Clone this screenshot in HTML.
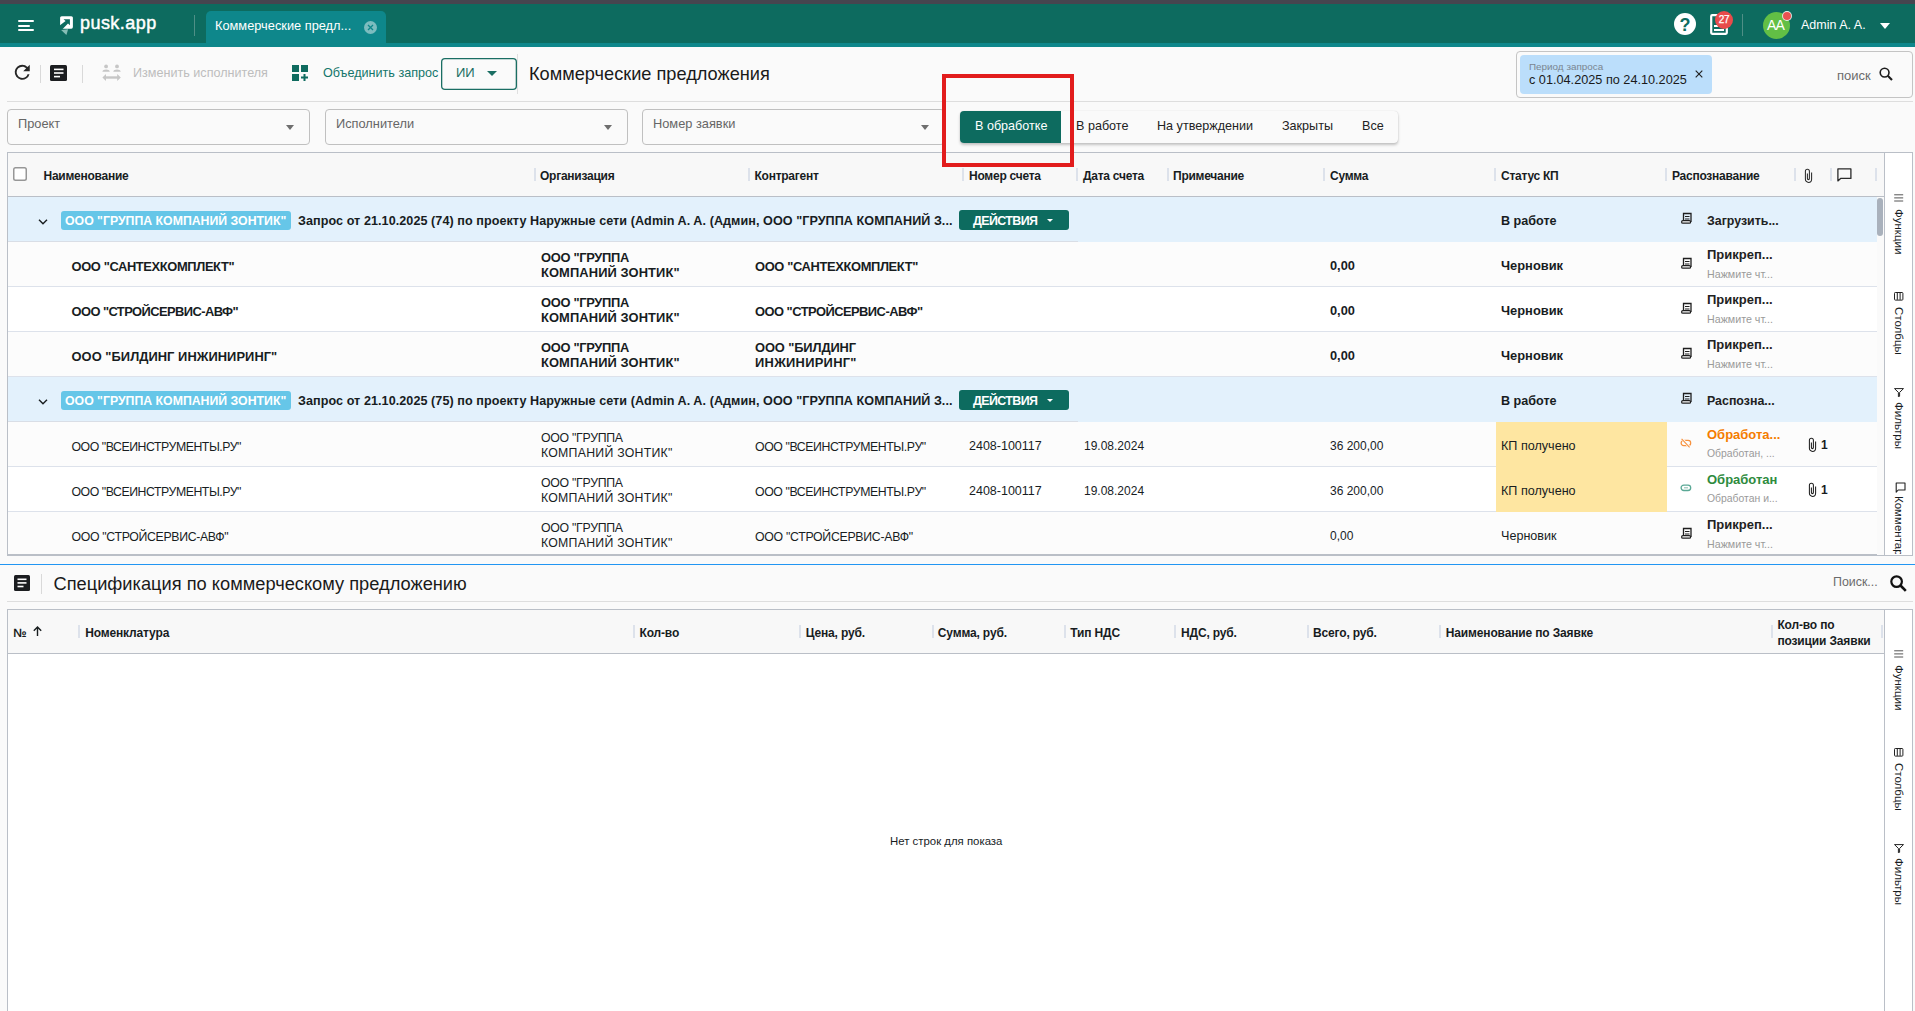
<!DOCTYPE html>
<html lang="ru">
<head>
<meta charset="utf-8">
<title>Коммерческие предложения</title>
<style>
*{box-sizing:border-box;margin:0;padding:0}
html,body{width:1915px;height:1011px;overflow:hidden;background:#fafafa}
body{font-family:"Liberation Sans",sans-serif;position:relative;color:#212121}
.a{position:absolute}
.t{position:absolute;white-space:nowrap;line-height:1}
svg{display:block}
/* top bar */
#strip{left:0;top:0;width:1915px;height:4px;background:#46454f}
#topbar{left:0;top:4px;width:1915px;height:39px;background:#0d6b5f}
#topline{left:0;top:43px;width:1915px;height:4px;background:#0e878b}
#tab{left:206px;top:11px;width:180px;height:32px;background:#0e878b;border-radius:5px 5px 0 0}
/* toolbar */
.vsep{position:absolute;width:1px;background:#d9d9d9}
.hline{position:absolute;height:1px;background:#dcdcdc}
.sel{position:absolute;top:109px;height:36px;border:1px solid #c0c0c0;border-radius:4px;background:#fafafa}
.tri{position:absolute;width:0;height:0;border-left:4px solid transparent;border-right:4px solid transparent;border-top:5px solid #6e6e6e}
/* tables */
.grid{position:absolute;border:1px solid #babfc7;background:#fff}
.hdr{position:absolute;left:0;top:0;background:#f8f8f8;border-bottom:1px solid #babfc7}
.hs{position:absolute;width:2px;height:13px;background:#dde2eb}
.ht{position:absolute;white-space:nowrap;font-weight:700;font-size:12px;color:#181d1f;line-height:1}
.row{position:absolute;left:0;height:45px;border-bottom:1px solid #dde2eb}
.side{position:absolute;background:#fff;border-left:1px solid #babfc7}
.vt{position:absolute;writing-mode:vertical-rl;white-space:nowrap;font-size:12px;color:#181d1f;line-height:1}
</style>
</head>
<body>
<!-- ===== TOP BAR ===== -->
<div class="a" id="strip"></div>
<div class="a" id="topbar"></div>
<div class="a" id="topline"></div>
<!-- hamburger -->
<div class="a" style="left:18px;top:19.6px;width:16px;height:2px;background:#fff;border-radius:1px"></div>
<div class="a" style="left:18px;top:24.5px;width:12px;height:2px;background:#fff;border-radius:1px"></div>
<div class="a" style="left:18px;top:29.3px;width:16px;height:2px;background:#fff;border-radius:1px"></div>
<!-- logo -->
<svg class="a" style="left:59px;top:15px" width="16" height="22" viewBox="0 0 16 22">
  <rect x="1.1" y="1.2" width="12.8" height="12.5" rx="1.6" fill="#fff"/>
  <path d="M4.5 4.2H10.9V10.2L9 8.4 3.6 13.9H1V10.2L6.6 6.1z" fill="#0d6b5f"/>
  <path d="M2.1 15.1L9.1 14.2 7.4 19.9z" fill="#86bdb5"/>
</svg>
<div class="t" style="left:80px;top:14px;font-size:18px;font-weight:400;color:#fff;-webkit-text-stroke:0.45px #fff;letter-spacing:0.45px">pusk.app</div>
<div class="vsep" style="left:194px;top:15px;height:21px;background:#4f8f86"></div>
<div class="a" id="tab"></div>
<div class="t" style="left:215px;top:20px;font-size:12.8px;color:#fff">Коммерческие предл...</div>
<div class="a" style="left:364px;top:21px;width:13px;height:13px;border-radius:50%;background:#7cbcbf"></div>
<svg class="a" style="left:367px;top:24px" width="7" height="7" viewBox="0 0 7 7"><path d="M1 1l5 5M6 1l-5 5" stroke="#0e878b" stroke-width="1.3"/></svg>
<!-- right side -->
<div class="a" style="left:1674px;top:13px;width:22px;height:22px;border-radius:50%;background:#fff"></div>
<div class="t" style="left:1674px;top:15.5px;width:22px;text-align:center;font-size:18px;font-weight:700;color:#0d6b5f">?</div>
<svg class="a" style="left:1710px;top:14px" width="18" height="21" viewBox="0 0 18 21"><rect x="1.2" y="1.2" width="15.6" height="18.6" rx="1" fill="none" stroke="#fff" stroke-width="2.2"/><rect x="4" y="11" width="10" height="2" fill="#fff"/><rect x="4" y="15" width="10" height="2" fill="#fff"/></svg>
<div class="a" style="left:1715px;top:11px;width:18px;height:18px;border-radius:50%;background:#e84b4b"></div>
<div class="t" style="left:1715px;top:15px;width:18px;text-align:center;font-size:10px;font-weight:400;color:#fff;-webkit-text-stroke:0.25px #fff;letter-spacing:-0.2px">27</div>
<div class="vsep" style="left:1742px;top:14px;height:22px;background:#4f8f86"></div>
<div class="a" style="left:1763px;top:12px;width:27px;height:27px;border-radius:50%;background:#62bf45"></div>
<div class="t" style="left:1767px;top:18px;font-size:14px;color:#fff;letter-spacing:-0.8px">AA</div>
<div class="a" style="left:1782.6px;top:11.6px;width:8px;height:8px;border-radius:50%;background:#e85252;box-shadow:0 0 0 0.9px #e8f0ee"></div>
<div class="t" style="left:1801px;top:19px;font-size:12.5px;color:#fff">Admin A. A.</div>
<div class="tri" style="left:1880px;top:23px;border-left-width:5px;border-right-width:5px;border-top:6px solid #fff"></div>

<!-- ===== TOOLBAR ===== -->
<svg class="a" style="left:10.5px;top:61px" width="22.5" height="22.5" viewBox="0 0 24 24"><path d="M17.65 6.35A7.958 7.958 0 0 0 12 4a8 8 0 1 0 7.73 10h-2.08A5.99 5.99 0 0 1 12 18a6 6 0 1 1 0-12c1.66 0 3.14.69 4.22 1.78L13 11h7V4z" fill="#262626"/></svg>
<div class="vsep" style="left:40px;top:65px;height:18px"></div>
<svg class="a" style="left:50px;top:65px" width="17" height="16" viewBox="0 0 17 16"><rect x="0" y="0" width="17" height="16" rx="1.5" fill="#1b1d20"/><rect x="4" y="3.6" width="9.5" height="1.6" fill="#fff"/><rect x="4" y="7.2" width="9.5" height="1.6" fill="#fff"/><rect x="4" y="10.8" width="6" height="1.6" fill="#fff"/></svg>
<div class="vsep" style="left:82px;top:65px;height:18px"></div>
<svg class="a" style="left:102px;top:64px" width="19" height="17" viewBox="0 0 19 17"><circle cx="4.1" cy="2.4" r="1.9" fill="#c6c6c6"/><circle cx="15" cy="2.4" r="1.9" fill="#c6c6c6"/><path d="M0.4 7.8c0-3.2 7.4-3.2 7.4 0z M11.3 7.8c0-3.2 7.4-3.2 7.4 0z" fill="#c6c6c6"/><path d="M3 13.5h13" stroke="#c6c6c6" stroke-width="2.4"/><path d="M0.4 13.5l3.6-3.4v6.8z M18.8 13.5l-3.6-3.4v6.8z" fill="#c6c6c6"/></svg>
<div class="t" style="left:133px;top:66.5px;font-size:12.6px;color:#bdbdbd">Изменить исполнителя</div>
<svg class="a" style="left:292px;top:65px" width="17" height="16" viewBox="0 0 17 16"><rect x="0" y="0" width="7" height="7" fill="#0f6b5f"/><rect x="9" y="0" width="7" height="7" fill="#0f6b5f"/><rect x="0" y="9" width="7" height="7" fill="#0f6b5f"/><path d="M12.5 9v7M9 12.5h7" stroke="#0f6b5f" stroke-width="2"/></svg>
<div class="t" style="left:323px;top:66.5px;font-size:12.6px;color:#14756a">Объединить запрос</div>
<div class="a" style="left:441px;top:58px;width:76px;height:32px;box-shadow:inset 0 0 0 1.3px #1a6e63;border-radius:4px"></div>
<div class="t" style="left:456px;top:66px;font-size:13px;color:#1a6e63">ИИ</div>
<div class="tri" style="left:487px;top:71px;border-left-width:5px;border-right-width:5px;border-top:5px solid #1a6e63"></div>
<div class="vsep" style="left:517px;top:54px;height:40px;background:#e0e0e0"></div>
<div class="t" style="left:529px;top:65px;font-size:18.2px;color:#1a1a1a">Коммерческие предложения</div>
<!-- search -->
<div class="a" style="left:1516px;top:51px;width:397px;height:47px;border:1px solid #c4c4c4;border-radius:4px"></div>
<div class="a" style="left:1520px;top:55px;width:192px;height:39px;background:#bbdefb;border-radius:4px"></div>
<div class="t" style="left:1529px;top:62px;font-size:9.9px;color:#7a8590">Период запроса</div>
<div class="t" style="left:1529px;top:74px;font-size:12.7px;color:#1a1a1a">с 01.04.2025 по 24.10.2025</div>
<svg class="a" style="left:1695px;top:70px" width="8" height="8" viewBox="0 0 8 8"><path d="M0.7 0.7l6.6 6.6M7.3 0.7l-6.6 6.6" stroke="#222" stroke-width="1.15"/></svg>
<div class="t" style="left:1837px;top:69px;font-size:13px;color:#6b6b6b">поиск</div>
<svg class="a" style="left:1879px;top:66.5px" width="14" height="14" viewBox="0 0 14 14"><circle cx="5.6" cy="5.6" r="4.4" fill="none" stroke="#1c1c1c" stroke-width="1.6"/><path d="M8.8 8.8l4.2 4.2" stroke="#1c1c1c" stroke-width="2.1"/></svg>
<div class="hline" style="left:7px;top:101px;width:1906px;background:#dedede"></div>

<!-- ===== FILTER ROW ===== -->
<div class="sel" style="left:7px;width:303px"></div>
<div class="t" style="left:18px;top:118.4px;font-size:12.8px;color:#666">Проект</div>
<div class="tri" style="left:286px;top:125px"></div>
<div class="sel" style="left:325px;width:303px"></div>
<div class="t" style="left:336px;top:118.4px;font-size:12.8px;color:#666">Исполнители</div>
<div class="tri" style="left:604px;top:125px"></div>
<div class="sel" style="left:642px;width:303px"></div>
<div class="t" style="left:653px;top:118.4px;font-size:12.8px;color:#666">Номер заявки</div>
<div class="tri" style="left:921px;top:125px"></div>
<!-- segmented -->
<div class="a" style="left:960px;top:111px;width:438px;height:32px;background:#fafafa;border-radius:4px;box-shadow:0 2px 3px rgba(0,0,0,0.22),0 0 1px rgba(0,0,0,0.18)"></div>
<div class="a" style="left:960px;top:111px;width:101px;height:32px;background:#0d6b5f;border-radius:4px 0 0 4px"></div>
<div class="t" style="left:975px;top:120px;font-size:12.6px;color:#fff">В обработке</div>
<div class="t" style="left:1076px;top:120px;font-size:12.6px;color:#232323">В работе</div>
<div class="t" style="left:1157px;top:120px;font-size:12.6px;color:#232323">На утверждении</div>
<div class="t" style="left:1282px;top:120px;font-size:12.6px;color:#232323">Закрыты</div>
<div class="t" style="left:1362px;top:120px;font-size:12.6px;color:#232323">Все</div>

<!-- ===== TABLE 1 ===== -->
<div class="a" style="left:7px;top:152px;width:1906px;height:404px;border:1px solid #babfc7;border-bottom-width:2px;background:#fff"></div>
<div class="a" style="left:8px;top:153px;width:1876px;height:44px;background:#f8f8f8;border-bottom:1px solid #babfc7"></div>
<div class="a" style="left:13px;top:167px;width:14px;height:14px;box-shadow:inset 0 0 0 1.5px #979797;border-radius:2.5px;background:#fff"></div>
<div class="t" style="left:43.5px;top:169.5px;font-size:12px;font-weight:700;color:#181d1f;letter-spacing:-0.25px">Наименование</div>
<div class="t" style="left:540px;top:169.5px;font-size:12px;font-weight:700;color:#181d1f;letter-spacing:-0.25px">Организация</div>
<div class="t" style="left:754.5px;top:169.5px;font-size:12px;font-weight:700;color:#181d1f;letter-spacing:-0.25px">Контрагент</div>
<div class="t" style="left:969px;top:169.5px;font-size:12px;font-weight:700;color:#181d1f;letter-spacing:-0.25px">Номер счета</div>
<div class="t" style="left:1083px;top:169.5px;font-size:12px;font-weight:700;color:#181d1f;letter-spacing:-0.25px">Дата счета</div>
<div class="t" style="left:1173px;top:169.5px;font-size:12px;font-weight:700;color:#181d1f;letter-spacing:-0.25px">Примечание</div>
<div class="t" style="left:1330px;top:169.5px;font-size:12px;font-weight:700;color:#181d1f;letter-spacing:-0.25px">Сумма</div>
<div class="t" style="left:1501px;top:169.5px;font-size:12px;font-weight:700;color:#181d1f;letter-spacing:-0.25px">Статус КП</div>
<div class="t" style="left:1672px;top:169.5px;font-size:12px;font-weight:700;color:#181d1f;letter-spacing:-0.25px">Распознавание</div>
<div class="hs" style="left:534px;top:168px"></div>
<div class="hs" style="left:747.5px;top:168px"></div>
<div class="hs" style="left:962px;top:168px"></div>
<div class="hs" style="left:1076px;top:168px"></div>
<div class="hs" style="left:1166.5px;top:168px"></div>
<div class="hs" style="left:1323px;top:168px"></div>
<div class="hs" style="left:1493.5px;top:168px"></div>
<div class="hs" style="left:1664.5px;top:168px"></div>
<div class="hs" style="left:1794px;top:168px"></div>
<div class="hs" style="left:1829.5px;top:168px"></div>
<div class="hs" style="left:1875px;top:168px"></div>
<svg class="a" style="left:1804px;top:167.5px" width="9" height="15" viewBox="0 0 9 15"><path d="M7.6 4.5V11.3A3.1 3.1 0 0 1 1.4 11.3V3.2A2 2 0 0 1 5.4 3.2V10.6A1 1 0 0 1 3.4 10.6V5.5" fill="none" stroke="#2a2a2a" stroke-width="1.05"/></svg>
<svg class="a" style="left:1837px;top:168px" width="15" height="14" viewBox="0 0 15 14"><path d="M0.9 0.9h13v9.5H3.6L0.9 12.9z" fill="none" stroke="#2a2a2a" stroke-width="1.3" stroke-linejoin="round"/></svg>
<div class="a" style="left:1884px;top:153px;width:28px;height:402px;background:#fff;border-left:1px solid #babfc7"></div>
<div class="a" style="left:1877px;top:197px;width:7px;height:358px;background:#fafafa"></div>
<div class="a" style="left:1877px;top:198px;width:6px;height:38px;background:#a9b1bc;border-radius:3px"></div>
<div class="a" style="left:8px;top:197px;width:1869px;height:45px;background:#e3f1fc;"></div>
<div class="a" style="left:8px;top:241px;width:1070px;height:1px;background:#d9dee6"></div>
<div class="a" style="left:8px;top:242px;width:1869px;height:45px;background:#fcfcfc;border-bottom:1px solid #dde2eb;"></div>
<div class="a" style="left:8px;top:287px;width:1869px;height:45px;background:#ffffff;border-bottom:1px solid #dde2eb;"></div>
<div class="a" style="left:8px;top:332px;width:1869px;height:45px;background:#fcfcfc;border-bottom:1px solid #dde2eb;"></div>
<div class="a" style="left:8px;top:377px;width:1869px;height:45px;background:#e3f1fc;"></div>
<div class="a" style="left:8px;top:421px;width:1070px;height:1px;background:#d9dee6"></div>
<div class="a" style="left:8px;top:422px;width:1869px;height:45px;background:#fcfcfc;border-bottom:1px solid #dde2eb;"></div>
<div class="a" style="left:8px;top:467px;width:1869px;height:45px;background:#ffffff;border-bottom:1px solid #dde2eb;"></div>
<div class="a" style="left:8px;top:512px;width:1869px;height:42px;background:#fcfcfc;"></div>
<svg class="a" style="left:38px;top:219px" width="10" height="6" viewBox="0 0 10 6"><path d="M1 0.8l4 4 4-4" fill="none" stroke="#181d1f" stroke-width="1.4"/></svg>
<div class="a" style="left:61px;top:211px;width:230px;height:19px;background:#66c6e8;border-radius:3px"></div>
<div class="t" style="left:65px;top:215.2px;font-size:12.3px;font-weight:700;color:#fff;">ООО "ГРУППА КОМПАНИЙ ЗОНТИК"</div>
<div class="t" style="left:298px;top:215.4px;font-size:12.6px;font-weight:700;color:#181d1f;letter-spacing:0.061px;">Запрос от 21.10.2025 (74) по проекту Наружные сети (Admin A. A. (Админ, ООО "ГРУППА КОМПАНИЙ З...</div>
<div class="a" style="left:959px;top:210px;width:110px;height:20px;background:#0d6b5f;border-radius:3px"></div>
<div class="t" style="left:973px;top:214.8px;font-size:12.4px;font-weight:700;color:#fff;letter-spacing:-0.580px;">ДЕЙСТВИЯ</div>
<div class="tri" style="left:1047px;top:219px;border-left-width:3px;border-right-width:3px;border-top:3px solid #fff"></div>
<div class="t" style="left:1501px;top:215.4px;font-size:12.6px;font-weight:700;color:#181d1f;">В работе</div>
<svg class="a" style="left:1681px;top:212px" width="12" height="12" viewBox="0 0 12 12"><path d="M2.5 9V1.5h7.5v8.5" fill="none" stroke="#1f1f1f" stroke-width="1.3"/><path d="M4 4.5h4.5M4 7h4.5" stroke="#1f1f1f" stroke-width="1.2"/><rect x="0.6" y="8.6" width="9" height="2.6" rx="1.3" fill="#fff" stroke="#1f1f1f" stroke-width="1.2"/></svg>
<div class="t" style="left:1707px;top:215.0px;font-size:12.4px;font-weight:700;color:#222;">Загрузить...</div>
<div class="t" style="left:71.5px;top:260.5px;font-size:12.9px;font-weight:700;color:#181d1f;letter-spacing:-0.376px;">ООО "САНТЕХКОМПЛЕКТ"</div>
<div class="t" style="left:541px;top:251.8px;font-size:12.9px;font-weight:700;color:#181d1f;letter-spacing:-0.306px;">ООО "ГРУППА</div>
<div class="t" style="left:541px;top:266.8px;font-size:12.9px;font-weight:700;color:#181d1f;letter-spacing:0.102px;">КОМПАНИЙ ЗОНТИК"</div>
<div class="t" style="left:755px;top:260.5px;font-size:12.9px;font-weight:700;color:#181d1f;letter-spacing:-0.361px;">ООО "САНТЕХКОМПЛЕКТ"</div>
<div class="t" style="left:1330px;top:260.0px;font-size:12.8px;font-weight:700;color:#181d1f;">0,00</div>
<div class="t" style="left:1501px;top:260.1px;font-size:12.9px;font-weight:700;color:#181d1f;">Черновик</div>
<svg class="a" style="left:1681px;top:257px" width="12" height="12" viewBox="0 0 12 12"><path d="M2.5 9V1.5h7.5v8.5" fill="none" stroke="#1f1f1f" stroke-width="1.3"/><path d="M4 4.5h4.5M4 7h4.5" stroke="#1f1f1f" stroke-width="1.2"/><rect x="0.6" y="8.6" width="9" height="2.6" rx="1.3" fill="#fff" stroke="#1f1f1f" stroke-width="1.2"/></svg>
<div class="t" style="left:1707px;top:248px;font-size:13px;font-weight:700;color:#222;">Прикреп...</div>
<div class="t" style="left:1707px;top:269px;font-size:10.7px;font-weight:400;color:#9a9a9a;">Нажмите чт...</div>
<div class="t" style="left:71.5px;top:305.5px;font-size:12.9px;font-weight:700;color:#181d1f;letter-spacing:-0.567px;">ООО "СТРОЙСЕРВИС-АВФ"</div>
<div class="t" style="left:541px;top:296.8px;font-size:12.9px;font-weight:700;color:#181d1f;letter-spacing:-0.306px;">ООО "ГРУППА</div>
<div class="t" style="left:541px;top:311.8px;font-size:12.9px;font-weight:700;color:#181d1f;letter-spacing:0.102px;">КОМПАНИЙ ЗОНТИК"</div>
<div class="t" style="left:755px;top:305.5px;font-size:12.9px;font-weight:700;color:#181d1f;letter-spacing:-0.522px;">ООО "СТРОЙСЕРВИС-АВФ"</div>
<div class="t" style="left:1330px;top:305.0px;font-size:12.8px;font-weight:700;color:#181d1f;">0,00</div>
<div class="t" style="left:1501px;top:305.1px;font-size:12.9px;font-weight:700;color:#181d1f;">Черновик</div>
<svg class="a" style="left:1681px;top:302px" width="12" height="12" viewBox="0 0 12 12"><path d="M2.5 9V1.5h7.5v8.5" fill="none" stroke="#1f1f1f" stroke-width="1.3"/><path d="M4 4.5h4.5M4 7h4.5" stroke="#1f1f1f" stroke-width="1.2"/><rect x="0.6" y="8.6" width="9" height="2.6" rx="1.3" fill="#fff" stroke="#1f1f1f" stroke-width="1.2"/></svg>
<div class="t" style="left:1707px;top:293px;font-size:13px;font-weight:700;color:#222;">Прикреп...</div>
<div class="t" style="left:1707px;top:314px;font-size:10.7px;font-weight:400;color:#9a9a9a;">Нажмите чт...</div>
<div class="t" style="left:71.5px;top:350.5px;font-size:12.9px;font-weight:700;color:#181d1f;letter-spacing:0.046px;">ООО "БИЛДИНГ ИНЖИНИРИНГ"</div>
<div class="t" style="left:541px;top:341.8px;font-size:12.9px;font-weight:700;color:#181d1f;letter-spacing:-0.306px;">ООО "ГРУППА</div>
<div class="t" style="left:541px;top:356.8px;font-size:12.9px;font-weight:700;color:#181d1f;letter-spacing:0.102px;">КОМПАНИЙ ЗОНТИК"</div>
<div class="t" style="left:755px;top:341.8px;font-size:12.9px;font-weight:700;color:#181d1f;letter-spacing:-0.119px;">ООО "БИЛДИНГ</div>
<div class="t" style="left:755px;top:356.8px;font-size:12.9px;font-weight:700;color:#181d1f;letter-spacing:0.276px;">ИНЖИНИРИНГ"</div>
<div class="t" style="left:1330px;top:350.0px;font-size:12.8px;font-weight:700;color:#181d1f;">0,00</div>
<div class="t" style="left:1501px;top:350.1px;font-size:12.9px;font-weight:700;color:#181d1f;">Черновик</div>
<svg class="a" style="left:1681px;top:347px" width="12" height="12" viewBox="0 0 12 12"><path d="M2.5 9V1.5h7.5v8.5" fill="none" stroke="#1f1f1f" stroke-width="1.3"/><path d="M4 4.5h4.5M4 7h4.5" stroke="#1f1f1f" stroke-width="1.2"/><rect x="0.6" y="8.6" width="9" height="2.6" rx="1.3" fill="#fff" stroke="#1f1f1f" stroke-width="1.2"/></svg>
<div class="t" style="left:1707px;top:338px;font-size:13px;font-weight:700;color:#222;">Прикреп...</div>
<div class="t" style="left:1707px;top:359px;font-size:10.7px;font-weight:400;color:#9a9a9a;">Нажмите чт...</div>
<svg class="a" style="left:38px;top:399px" width="10" height="6" viewBox="0 0 10 6"><path d="M1 0.8l4 4 4-4" fill="none" stroke="#181d1f" stroke-width="1.4"/></svg>
<div class="a" style="left:61px;top:391px;width:230px;height:19px;background:#66c6e8;border-radius:3px"></div>
<div class="t" style="left:65px;top:395.2px;font-size:12.3px;font-weight:700;color:#fff;">ООО "ГРУППА КОМПАНИЙ ЗОНТИК"</div>
<div class="t" style="left:298px;top:395.4px;font-size:12.6px;font-weight:700;color:#181d1f;letter-spacing:0.061px;">Запрос от 21.10.2025 (75) по проекту Наружные сети (Admin A. A. (Админ, ООО "ГРУППА КОМПАНИЙ З...</div>
<div class="a" style="left:959px;top:390px;width:110px;height:20px;background:#0d6b5f;border-radius:3px"></div>
<div class="t" style="left:973px;top:394.8px;font-size:12.4px;font-weight:700;color:#fff;letter-spacing:-0.580px;">ДЕЙСТВИЯ</div>
<div class="tri" style="left:1047px;top:399px;border-left-width:3px;border-right-width:3px;border-top:3px solid #fff"></div>
<div class="t" style="left:1501px;top:395.4px;font-size:12.6px;font-weight:700;color:#181d1f;">В работе</div>
<svg class="a" style="left:1681px;top:392px" width="12" height="12" viewBox="0 0 12 12"><path d="M2.5 9V1.5h7.5v8.5" fill="none" stroke="#1f1f1f" stroke-width="1.3"/><path d="M4 4.5h4.5M4 7h4.5" stroke="#1f1f1f" stroke-width="1.2"/><rect x="0.6" y="8.6" width="9" height="2.6" rx="1.3" fill="#fff" stroke="#1f1f1f" stroke-width="1.2"/></svg>
<div class="t" style="left:1707px;top:395.0px;font-size:12.4px;font-weight:700;color:#222;">Распозна...</div>
<div class="t" style="left:71.5px;top:440.5px;font-size:12.3px;font-weight:400;color:#181d1f;letter-spacing:-0.458px;">ООО "ВСЕИНСТРУМЕНТЫ.РУ"</div>
<div class="t" style="left:541px;top:431.8px;font-size:12.3px;font-weight:400;color:#181d1f;letter-spacing:-0.276px;">ООО "ГРУППА</div>
<div class="t" style="left:541px;top:446.8px;font-size:12.3px;font-weight:400;color:#181d1f;letter-spacing:0.260px;">КОМПАНИЙ ЗОНТИК"</div>
<div class="t" style="left:755px;top:440.5px;font-size:12.3px;font-weight:400;color:#181d1f;letter-spacing:-0.404px;">ООО "ВСЕИНСТРУМЕНТЫ.РУ"</div>
<div class="t" style="left:969px;top:440.0px;font-size:12.5px;font-weight:400;color:#181d1f;">2408-100117</div>
<div class="t" style="left:1084px;top:440.0px;font-size:12px;font-weight:400;color:#181d1f;">19.08.2024</div>
<div class="t" style="left:1330px;top:440.0px;font-size:12px;font-weight:400;color:#181d1f;">36 200,00</div>
<div class="a" style="left:1496px;top:422px;width:171px;height:45px;background:#fee6a1"></div>
<div class="t" style="left:1501px;top:440.1px;font-size:12.6px;font-weight:400;color:#181d1f;">КП получено</div>
<svg class="a" style="left:1680px;top:438px" width="12" height="10" viewBox="0 0 12 10"><rect x="1.1" y="2.4" width="9.6" height="5.2" rx="2.6" fill="none" stroke="#f7913d" stroke-width="1.2"/><path d="M1.8 0.6l7.8 8.8" stroke="#fcfcfc" stroke-width="2.6"/><path d="M1.6 0.8l8 8.6" stroke="#f7913d" stroke-width="1.1"/></svg>
<div class="t" style="left:1707px;top:428px;font-size:13px;font-weight:700;color:#f57c00;">Обработа...</div>
<div class="t" style="left:1707px;top:449px;font-size:10.4px;font-weight:400;color:#9a9a9a;">Обработан, ...</div>
<svg class="a" style="left:1808px;top:436.5px" width="9" height="15" viewBox="0 0 9 15"><path d="M7.6 4.5V11.3A3.1 3.1 0 0 1 1.4 11.3V3.2A2 2 0 0 1 5.4 3.2V10.6A1 1 0 0 1 3.4 10.6V5.5" fill="none" stroke="#1f1f1f" stroke-width="1.05"/></svg>
<div class="t" style="left:1821px;top:439.0px;font-size:12px;font-weight:700;color:#181d1f;">1</div>
<div class="t" style="left:71.5px;top:485.5px;font-size:12.3px;font-weight:400;color:#181d1f;letter-spacing:-0.458px;">ООО "ВСЕИНСТРУМЕНТЫ.РУ"</div>
<div class="t" style="left:541px;top:476.8px;font-size:12.3px;font-weight:400;color:#181d1f;letter-spacing:-0.276px;">ООО "ГРУППА</div>
<div class="t" style="left:541px;top:491.8px;font-size:12.3px;font-weight:400;color:#181d1f;letter-spacing:0.260px;">КОМПАНИЙ ЗОНТИК"</div>
<div class="t" style="left:755px;top:485.5px;font-size:12.3px;font-weight:400;color:#181d1f;letter-spacing:-0.404px;">ООО "ВСЕИНСТРУМЕНТЫ.РУ"</div>
<div class="t" style="left:969px;top:485.0px;font-size:12.5px;font-weight:400;color:#181d1f;">2408-100117</div>
<div class="t" style="left:1084px;top:485.0px;font-size:12px;font-weight:400;color:#181d1f;">19.08.2024</div>
<div class="t" style="left:1330px;top:485.0px;font-size:12px;font-weight:400;color:#181d1f;">36 200,00</div>
<div class="a" style="left:1496px;top:467px;width:171px;height:45px;background:#fee6a1"></div>
<div class="t" style="left:1501px;top:485.1px;font-size:12.6px;font-weight:400;color:#181d1f;">КП получено</div>
<svg class="a" style="left:1680px;top:484px" width="12" height="8" viewBox="0 0 12 8"><rect x="1.1" y="1.1" width="9.6" height="5.4" rx="2.7" fill="none" stroke="#5aa895" stroke-width="1.3"/><path d="M4 3.8h4" stroke="#8fbfb2" stroke-width="1.1"/></svg>
<div class="t" style="left:1707px;top:473px;font-size:13px;font-weight:700;color:#2e8b3e;">Обработан</div>
<div class="t" style="left:1707px;top:494px;font-size:10.4px;font-weight:400;color:#9a9a9a;">Обработан и...</div>
<svg class="a" style="left:1808px;top:481.5px" width="9" height="15" viewBox="0 0 9 15"><path d="M7.6 4.5V11.3A3.1 3.1 0 0 1 1.4 11.3V3.2A2 2 0 0 1 5.4 3.2V10.6A1 1 0 0 1 3.4 10.6V5.5" fill="none" stroke="#1f1f1f" stroke-width="1.05"/></svg>
<div class="t" style="left:1821px;top:484.0px;font-size:12px;font-weight:700;color:#181d1f;">1</div>
<div class="t" style="left:71.5px;top:530.5px;font-size:12.3px;font-weight:400;color:#181d1f;letter-spacing:-0.332px;">ООО "СТРОЙСЕРВИС-АВФ"</div>
<div class="t" style="left:541px;top:521.8px;font-size:12.3px;font-weight:400;color:#181d1f;letter-spacing:-0.276px;">ООО "ГРУППА</div>
<div class="t" style="left:541px;top:536.8px;font-size:12.3px;font-weight:400;color:#181d1f;letter-spacing:0.260px;">КОМПАНИЙ ЗОНТИК"</div>
<div class="t" style="left:755px;top:530.5px;font-size:12.3px;font-weight:400;color:#181d1f;letter-spacing:-0.287px;">ООО "СТРОЙСЕРВИС-АВФ"</div>
<div class="t" style="left:1330px;top:530.0px;font-size:12px;font-weight:400;color:#181d1f;">0,00</div>
<div class="t" style="left:1501px;top:530.1px;font-size:12.6px;font-weight:400;color:#181d1f;">Черновик</div>
<svg class="a" style="left:1681px;top:527px" width="12" height="12" viewBox="0 0 12 12"><path d="M2.5 9V1.5h7.5v8.5" fill="none" stroke="#1f1f1f" stroke-width="1.3"/><path d="M4 4.5h4.5M4 7h4.5" stroke="#1f1f1f" stroke-width="1.2"/><rect x="0.6" y="8.6" width="9" height="2.6" rx="1.3" fill="#fff" stroke="#1f1f1f" stroke-width="1.2"/></svg>
<div class="t" style="left:1707px;top:518px;font-size:13px;font-weight:700;color:#222;">Прикреп...</div>
<div class="t" style="left:1707px;top:539px;font-size:10.7px;font-weight:400;color:#9a9a9a;">Нажмите чт...</div>
<svg class="a" style="left:1894px;top:194px" width="10" height="8" viewBox="0 0 10 8"><path d="M0.2 0.8h9M0.2 3.9h9M0.2 7h9" stroke="#555" stroke-width="1"/></svg>
<div class="vt" style="left:1892px;top:209px;font-size:11.5px">Функции</div>
<svg class="a" style="left:1894px;top:292px" width="10" height="9" viewBox="0 0 10 9"><rect x="0.5" y="0.5" width="8.4" height="7.6" rx="0.8" fill="none" stroke="#222" stroke-width="1"/><path d="M3.3 0.8v7M6.1 0.8v7" stroke="#222" stroke-width="1"/></svg>
<div class="vt" style="left:1892px;top:307px;font-size:11.5px">Столбцы</div>
<svg class="a" style="left:1894px;top:388px" width="10" height="9" viewBox="0 0 10 9"><path d="M0.5 0.6h9L5.6 4.4V8.3L4.4 8.8V4.4z" fill="none" stroke="#222" stroke-width="1" stroke-linejoin="round"/></svg>
<div class="vt" style="left:1892px;top:402px;font-size:11.5px">Фильтры</div>
<svg class="a" style="left:1895px;top:482px" width="11" height="11" viewBox="0 0 11 11"><path d="M1.2 10.2V1H10V8H3.2z" fill="none" stroke="#222" stroke-width="1.1" stroke-linejoin="round"/></svg>
<div class="vt" style="left:1892px;top:496px;height:58px;overflow:hidden;font-size:11.5px">Комментарии</div>
<!-- ===== SPEC ===== -->
<div class="a" style="left:0;top:564px;width:1915px;height:1px;background:#2196f3"></div>
<svg class="a" style="left:14px;top:575px" width="16" height="16" viewBox="0 0 16 16"><rect x="0" y="0" width="16" height="16" rx="1.5" fill="#1b1d20"/><rect x="3.5" y="3.5" width="9" height="1.6" fill="#fff"/><rect x="3.5" y="7.1" width="9" height="1.6" fill="#fff"/><rect x="3.5" y="10.7" width="6" height="1.6" fill="#fff"/></svg>
<div class="vsep" style="left:41px;top:574px;height:20px"></div>
<div class="t" style="left:53.5px;top:575.4px;font-size:18.25px;font-weight:400;color:#1a1a1a;">Спецификация по коммерческому предложению</div>
<div class="t" style="left:1833px;top:575.5px;font-size:12.4px;font-weight:400;color:#6b6b6b;">Поиск...</div>
<svg class="a" style="left:1890px;top:575px" width="17" height="17" viewBox="0 0 17 17"><circle cx="6.6" cy="6.6" r="5.3" fill="none" stroke="#111" stroke-width="2.2"/><path d="M10.5 10.5l5.3 5.3" stroke="#111" stroke-width="2.6"/></svg>
<div class="hline" style="left:7px;top:601px;width:1906px;background:#dedede"></div>
<div class="a" style="left:7px;top:609px;width:1906px;height:420px;border:1px solid #babfc7;background:#fff"></div>
<div class="a" style="left:8px;top:610px;width:1876px;height:44px;background:#f8f8f8;border-bottom:1px solid #babfc7"></div>
<div class="t" style="left:13.2px;top:626.6px;font-size:12px;font-weight:700;color:#181d1f;">№</div>
<svg class="a" style="left:33px;top:626px" width="9" height="10" viewBox="0 0 9 10"><path d="M4.5 10V1.2M0.8 4.8l3.7-3.7 3.7 3.7" fill="none" stroke="#181d1f" stroke-width="1.4"/></svg>
<div class="t" style="left:85.2px;top:626.6px;font-size:12px;font-weight:700;color:#181d1f;letter-spacing:-0.15px">Номенклатура</div>
<div class="t" style="left:639.5px;top:626.6px;font-size:12px;font-weight:700;color:#181d1f;letter-spacing:-0.15px">Кол-во</div>
<div class="t" style="left:805.7px;top:626.6px;font-size:12px;font-weight:700;color:#181d1f;letter-spacing:-0.15px">Цена, руб.</div>
<div class="t" style="left:937.8px;top:626.6px;font-size:12px;font-weight:700;color:#181d1f;letter-spacing:-0.15px">Сумма, руб.</div>
<div class="t" style="left:1070.3px;top:626.6px;font-size:12px;font-weight:700;color:#181d1f;letter-spacing:-0.15px">Тип НДС</div>
<div class="t" style="left:1181px;top:626.6px;font-size:12px;font-weight:700;color:#181d1f;letter-spacing:-0.15px">НДС, руб.</div>
<div class="t" style="left:1313px;top:626.6px;font-size:12px;font-weight:700;color:#181d1f;letter-spacing:-0.15px">Всего, руб.</div>
<div class="t" style="left:1445.8px;top:626.6px;font-size:12px;font-weight:700;color:#181d1f;letter-spacing:-0.15px">Наименование по Заявке</div>
<div class="t" style="left:1777.4px;top:619px;font-size:12px;font-weight:700;color:#181d1f;letter-spacing:-0.15px">Кол-во по</div>
<div class="t" style="left:1777.4px;top:635px;font-size:12px;font-weight:700;color:#181d1f;letter-spacing:-0.15px">позиции Заявки</div>
<div class="hs" style="left:77.7px;top:625px"></div>
<div class="hs" style="left:632.5px;top:625px"></div>
<div class="hs" style="left:799px;top:625px"></div>
<div class="hs" style="left:931.5px;top:625px"></div>
<div class="hs" style="left:1063.6px;top:625px"></div>
<div class="hs" style="left:1174px;top:625px"></div>
<div class="hs" style="left:1306.5px;top:625px"></div>
<div class="hs" style="left:1438.8px;top:625px"></div>
<div class="hs" style="left:1771px;top:625px"></div>
<div class="hs" style="left:1880.8px;top:625px"></div>
<div class="a" style="left:1884px;top:610px;width:28px;height:420px;background:#fff;border-left:1px solid #babfc7"></div>
<div class="t" style="left:890px;top:835.5px;font-size:11.4px;font-weight:400;color:#181d1f;">Нет строк для показа</div>
<svg class="a" style="left:1894px;top:650px" width="10" height="8" viewBox="0 0 10 8"><path d="M0.2 0.8h9M0.2 3.9h9M0.2 7h9" stroke="#555" stroke-width="1"/></svg>
<div class="vt" style="left:1892px;top:665px;font-size:11.5px">Функции</div>
<svg class="a" style="left:1894px;top:748px" width="10" height="9" viewBox="0 0 10 9"><rect x="0.5" y="0.5" width="8.4" height="7.6" rx="0.8" fill="none" stroke="#222" stroke-width="1"/><path d="M3.3 0.8v7M6.1 0.8v7" stroke="#222" stroke-width="1"/></svg>
<div class="vt" style="left:1892px;top:763px;font-size:11.5px">Столбцы</div>
<svg class="a" style="left:1894px;top:844px" width="10" height="9" viewBox="0 0 10 9"><path d="M0.5 0.6h9L5.6 4.4V8.3L4.4 8.8V4.4z" fill="none" stroke="#222" stroke-width="1" stroke-linejoin="round"/></svg>
<div class="vt" style="left:1892px;top:858px;font-size:11.5px">Фильтры</div>


<!-- red annotation frame -->
<div class="a" style="left:942px;top:74px;width:132px;height:93px;border:4px solid #e21c1c"></div>
</body>
</html>
